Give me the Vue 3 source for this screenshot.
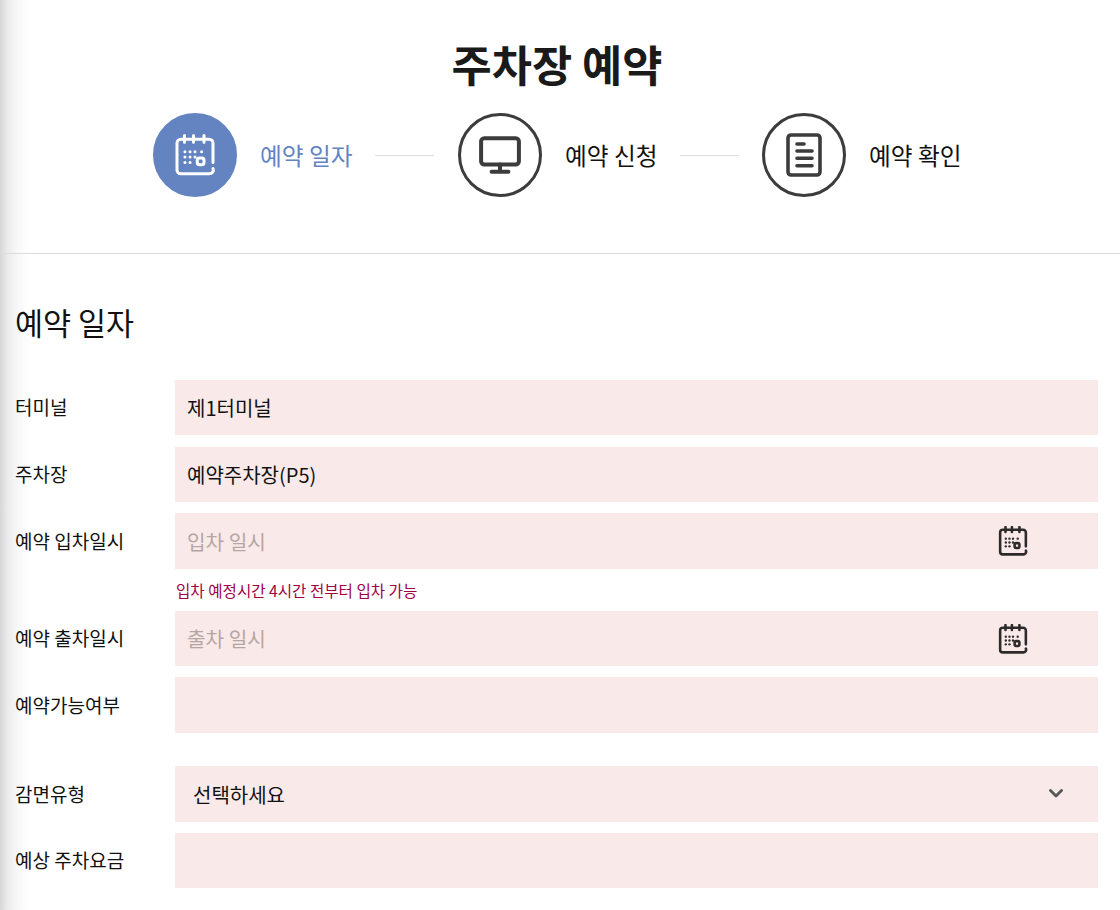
<script setup>
const stepsList = [
  { label: '예약 일자', icon: 'cal', active: true },
  { label: '예약 신청', icon: 'monitor', active: false },
  { label: '예약 확인', icon: 'doc', active: false }
]
const dots = [[7.3,11.8],[10.7,11.8],[14,11.8],[18.4,11.8],[7.3,15.400],[10.7,15.400],[14,15.400],[7.3,19],[10.7,19]]
const box = 'M26 19V6a2.500 2.500 0 0 0-2.500-2.500h-19A2.500 2.500 0 0 0 2 6v18a2.500 2.500 0 0 0 2.500 2.500h19A2.500 2.500 0 0 0 26 23'
</script>

<template>
  <div class="page">
    <div class="edge"></div>
    <header class="head">
      <div class="head-inner">
        <h1 class="title">주차장 예약</h1>
        <ol class="steps">
          <li v-for="(s, i) in stepsList" :key="s.label" class="step" :class="{ active: s.active }">
            <span class="circle">
              <svg v-if="s.icon === 'cal'" class="ic" viewBox="0 0 28 28" fill="none" stroke="currentColor" stroke-width="2" stroke-linecap="round" stroke-linejoin="round">
                <path :d="box"/>
                <path d="M7 1v4.500M13 1v4.500M20 1v4.500"/>
                <circle v-for="d in dots" :key="d.join()" :cx="d[0]" :cy="d[1]" r="1" fill="currentColor" stroke="none"/>
                <rect x="15.500" y="16" width="4.500" height="4.500" rx="1.500"/>
              </svg>
              <svg v-else-if="s.icon === 'monitor'" class="ic mon" viewBox="0 0 40 36" fill="none" stroke="currentColor" stroke-width="3.800" stroke-linecap="round" stroke-linejoin="round">
                <rect x="2" y="2" width="36" height="25" rx="3"/>
                <path d="M20 27v7M12 34h16"/>
              </svg>
              <svg v-else class="ic doc" viewBox="0 0 36 44" fill="none" stroke="currentColor" stroke-width="3.600" stroke-linecap="round" stroke-linejoin="round">
                <rect x="2" y="2" width="32" height="40" rx="3"/>
                <path d="M11 11h7M11 18h15M11 25.300h15M11 32.700h15"/>
              </svg>
            </span>
            <span class="label">{{ s.label }}</span>
            <span v-if="i < stepsList.length - 1" class="line"></span>
          </li>
        </ol>
      </div>
    </header>

    <main class="body">
      <h2 class="sub">예약 일자</h2>
      <div class="row"><span class="name">터미널</span><div class="field">제1터미널</div></div>
      <div class="row close"><span class="name">주차장</span><div class="field">예약주차장(P5)</div></div>
      <div class="row tall flush">
        <span class="name">예약 입차일시</span>
        <div class="field ph">입차 일시
          <svg class="fic" viewBox="0 0 28 28" fill="none" stroke="currentColor" stroke-width="2.400" stroke-linecap="round" stroke-linejoin="round">
            <path :d="box"/>
            <path d="M7 1v4.500M13 1v4.500M20 1v4.500"/>
            <circle v-for="d in dots" :key="d.join()" :cx="d[0]" :cy="d[1]" r="1.100" fill="currentColor" stroke="none"/>
            <rect x="15.500" y="16" width="4.500" height="4.500" rx="1.500"/>
          </svg>
        </div>
      </div>
      <p class="note">입차 예정시간 4시간 전부터 입차 가능</p>
      <div class="row close">
        <span class="name">예약 출차일시</span>
        <div class="field ph">출차 일시
          <svg class="fic" viewBox="0 0 28 28" fill="none" stroke="currentColor" stroke-width="2.400" stroke-linecap="round" stroke-linejoin="round">
            <path :d="box"/>
            <path d="M7 1v4.500M13 1v4.500M20 1v4.500"/>
            <circle v-for="d in dots" :key="d.join()" :cx="d[0]" :cy="d[1]" r="1.100" fill="currentColor" stroke="none"/>
            <rect x="15.500" y="16" width="4.500" height="4.500" rx="1.500"/>
          </svg>
        </div>
      </div>
      <div class="row tall gapafter"><span class="name">예약가능여부</span><div class="field"></div></div>
      <div class="row tall">
        <span class="name">감면유형</span>
        <div class="field sel">선택하세요
          <svg class="chev" viewBox="0 0 14 9" fill="none" stroke="currentColor" stroke-width="2.800" stroke-linecap="round" stroke-linejoin="round"><path d="M1.500 1.500 7 7l5.500-5.500"/></svg>
        </div>
      </div>
      <div class="row"><span class="name">예상 주차요금</span><div class="field"></div></div>
    </main>
  </div>
</template>

<style scoped>
.page {
  position: relative;
  width: 1120px;
  height: 910px;
  overflow: hidden;
  background: #fff;
  color: #111;
  font-family: "Noto Sans CJK KR", "Noto Sans", sans-serif;
}
.edge {
  position: absolute;
  left: 0;
  top: 0;
  bottom: 0;
  width: 30px;
  background: linear-gradient(to right, #d6d6d6, #ebebeb 25%, #f8f8f8 60%, #ffffff);
  pointer-events: none;
}
.head {
  position: relative;
  box-sizing: border-box;
  height: 254px;
  padding-top: 30px;
  border-bottom: 1px solid #ddd;
}
.head-inner { width: 1114px; }
.title {
  margin: 0;
  text-align: center;
  font-size: 43.700px;
  font-weight: 700;
  line-height: 67px;
  color: #1a1a1a;
}
.steps {
  list-style: none;
  margin: 16px 0 0;
  padding: 0;
  display: flex;
  justify-content: center;
}
.step {
  display: flex;
  align-items: center;
}
.circle {
  width: 84px;
  height: 84px;
  box-sizing: border-box;
  border: 3.500px solid #3c3c3c;
  border-radius: 50%;
  display: flex;
  align-items: center;
  justify-content: center;
  color: #3c3c3c;
}
.active .circle {
  background: #6383c1;
  border-color: #6383c1;
  color: #fff;
}
.ic { width: 42px; height: 42px; }
.ic.mon { width: 42px; height: 38px; }
.ic.doc { width: 36px; height: 44px; }
.label {
  width: 92px;
  margin-left: 23px;
  font-size: 23.700px;
  line-height: 34px;
  color: #111;
  white-space: nowrap;
}
.active .label { color: #6383c1; }
.line {
  width: 59px;
  height: 1px;
  background: #ddd;
  margin: 0 23px;
}
.active .line { margin-right: 24px; }
.body {
  position: relative;
  width: 1113px;
  box-sizing: border-box;
  padding: 0 15px;
}
.sub {
  margin: 0;
  padding-top: 46px;
  height: 126px;
  box-sizing: border-box;
  font-size: 30.500px;
  font-weight: 400;
  line-height: 44px;
  color: #111;
}
.row {
  display: flex;
  align-items: center;
  height: 55px;
  margin-bottom: 12px;
}
.row.tall { height: 56px; margin-bottom: 11px; }
.row.close { margin-bottom: 11px; }
.row.flush { margin-bottom: 0; }
.row.gapafter { margin-bottom: 33px; }
.name {
  width: 160px;
  flex: none;
  font-size: 19px;
  color: #111;
  position: relative;
  top: -1px;
}
.field {
  position: relative;
  flex: 1;
  height: 100%;
  display: flex;
  align-items: center;
  padding: 0 12px;
  background: #fae9e9;
  font-size: 20px;
  color: #111;
}
.field.ph { color: #b5a6a6; font-size: 20.200px; }
.field.sel { padding-left: 18px; }
.note {
  margin: 0;
  height: 42px;
  padding: 10px 0 0 161px;
  box-sizing: border-box;
  font-size: 15.600px;
  line-height: 22px;
  color: #a00046;
}
.fic {
  position: absolute;
  left: 823px;
  top: 50%;
  margin-top: -15px;
  width: 30px;
  height: 30px;
  color: #2e2a2a;
}
.chev {
  position: absolute;
  left: 874px;
  top: 50%;
  margin-top: -5px;
  width: 14px;
  height: 9px;
  color: #555;
}
</style>
